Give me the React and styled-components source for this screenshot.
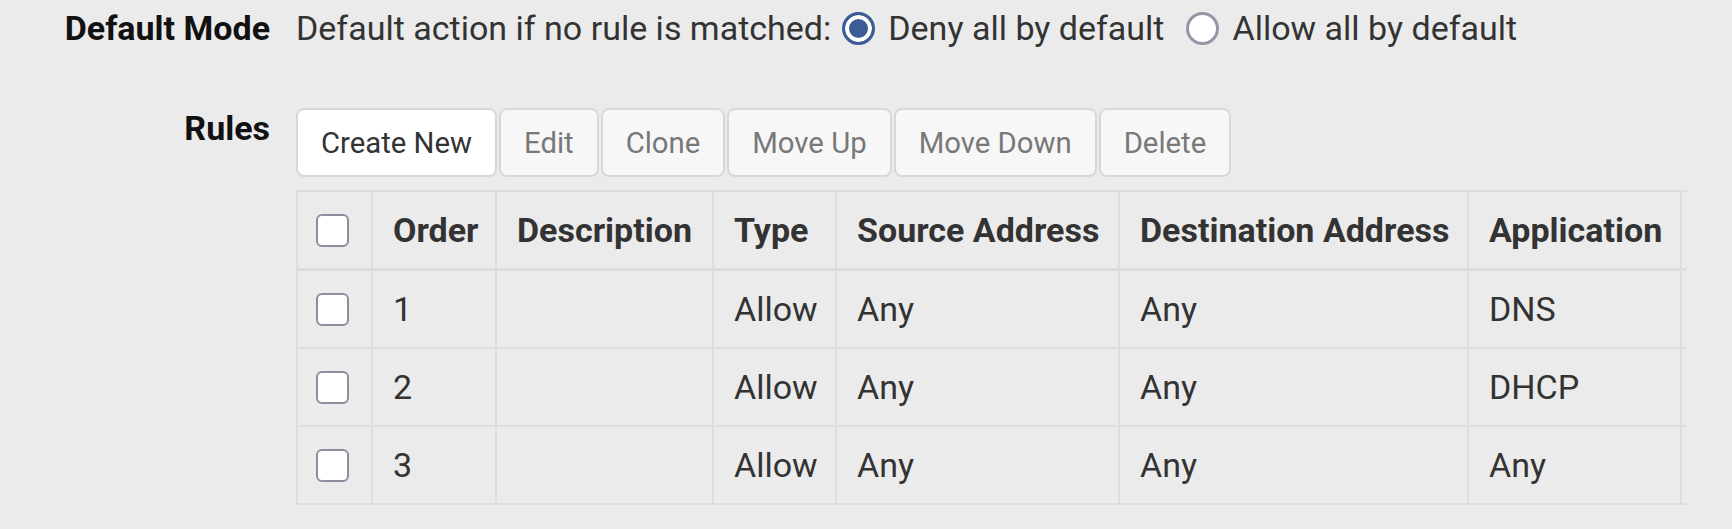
import styled, { createGlobalStyle } from 'styled-components';

const GlobalStyle = createGlobalStyle`
  body {
    margin: 0;
    background: #ebebeb;
    font-family: Roboto, "Liberation Sans", sans-serif;
    color: #333;
  }
`;

const Form = styled.div`
  padding-top: 8px;
`;

const FormRow = styled.div`
  display: flex;
  align-items: flex-start;
  gap: 26px;
  margin-top: ${(p) => p.$gap || 0}px;
`;

const Label = styled.div`
  width: 270px;
  flex: none;
  text-align: right;
  font-size: 34px;
  font-weight: 700;
  line-height: 40px;
  color: #111;
`;

const Content = styled.div`
  display: flex;
  flex-direction: column;
  min-width: 0;
`;

const InlineOptions = styled.div`
  display: flex;
  align-items: center;
  font-size: 34px;
  line-height: 40px;
  color: #333;
  white-space: nowrap;
`;

const RadioOption = styled.label`
  display: flex;
  align-items: center;
  gap: 13px;
  margin-left: ${(p) => p.$gap}px;
`;

const RadioMark = styled.span`
  width: 33px;
  height: 33px;
  box-sizing: border-box;
  border-radius: 50%;
  border: 3px solid ${(p) => (p.$checked ? '#3d5b97' : '#9795a6')};
  background: ${(p) => (p.$checked ? '#3d5b97' : '#fff')};
  box-shadow: ${(p) => (p.$checked ? 'inset 0 0 0 4px #fff' : 'none')};
`;

const Toolbar = styled.div`
  display: flex;
  gap: 2px;
`;

const Button = styled.button`
  height: 69px;
  padding: 0 23px;
  border: 2px solid #d8d8d8;
  border-radius: 8px;
  background: ${(p) => (p.$primary ? '#fff' : '#f7f7f7')};
  color: ${(p) => (p.$primary ? '#333' : '#787878')};
  font-family: Roboto, "Liberation Sans", sans-serif;
  font-size: 29.3px;
  cursor: ${(p) => (p.$primary ? 'pointer' : 'default')};
`;

const TableWrap = styled.div`
  width: 1391px;
  margin-top: 13px;
  overflow: hidden;
`;

const Table = styled.table`
  table-layout: fixed;
  width: 1600px;
  border-collapse: collapse;
  font-size: 34px;
  color: #333;
`;

const Th = styled.th`
  height: 76px;
  padding: 0 ${(p) => (p.$check ? 18 : 20)}px;
  text-align: left;
  font-weight: 700;
  border: 2px solid #dddddd;
  border-bottom-width: 3px;
  white-space: nowrap;
  overflow: hidden;
`;

const Td = styled.td`
  height: 76px;
  padding: 0 ${(p) => (p.$check ? 18 : 20)}px;
  border: 2px solid #dddddd;
  white-space: nowrap;
`;

const Check = styled.span`
  display: block;
  width: 33px;
  height: 33px;
  box-sizing: border-box;
  border: 2px solid #8f8ca0;
  border-radius: 6px;
  background: #fff;
`;

const columns = [
  { key: 'order', title: 'Order', width: 124 },
  { key: 'description', title: 'Description', width: 217 },
  { key: 'type', title: 'Type', width: 123 },
  { key: 'source', title: 'Source Address', width: 283 },
  { key: 'destination', title: 'Destination Address', width: 349 },
  { key: 'application', title: 'Application', width: 213 },
  { key: 'status', title: '', width: 216 },
];

const rules = [
  { order: 1, description: '', type: 'Allow', source: 'Any', destination: 'Any', application: 'DNS', status: '' },
  { order: 2, description: '', type: 'Allow', source: 'Any', destination: 'Any', application: 'DHCP', status: '' },
  { order: 3, description: '', type: 'Allow', source: 'Any', destination: 'Any', application: 'Any', status: '' },
];

const buttons = ['Create New', 'Edit', 'Clone', 'Move Up', 'Move Down', 'Delete'];

export default function App() {
  return (
    <>
      <GlobalStyle />
      <Form>
        <FormRow>
          <Label>Default Mode</Label>
          <InlineOptions>
            Default action if no rule is matched:
            <RadioOption $gap={11}>
              <RadioMark $checked />
              Deny all by default
            </RadioOption>
            <RadioOption $gap={22}>
              <RadioMark />
              Allow all by default
            </RadioOption>
          </InlineOptions>
        </FormRow>

        <FormRow $gap={60}>
          <Label>Rules</Label>
          <Content>
            <Toolbar>
              {buttons.map((b, i) => (
                <Button key={b} $primary={i === 0}>{b}</Button>
              ))}
            </Toolbar>
            <TableWrap>
              <Table>
                <colgroup>
                  <col style={{ width: 75 }} />
                  {columns.map((c) => (
                    <col key={c.key} style={{ width: c.width }} />
                  ))}
                </colgroup>
                <thead>
                  <tr>
                    <Th $check><Check /></Th>
                    {columns.map((c) => (
                      <Th key={c.key}>{c.title}</Th>
                    ))}
                  </tr>
                </thead>
                <tbody>
                  {rules.map((r) => (
                    <tr key={r.order}>
                      <Td $check><Check /></Td>
                      {columns.map((c) => (
                        <Td key={c.key}>{r[c.key]}</Td>
                      ))}
                    </tr>
                  ))}
                </tbody>
              </Table>
            </TableWrap>
          </Content>
        </FormRow>
      </Form>
    </>
  );
}
